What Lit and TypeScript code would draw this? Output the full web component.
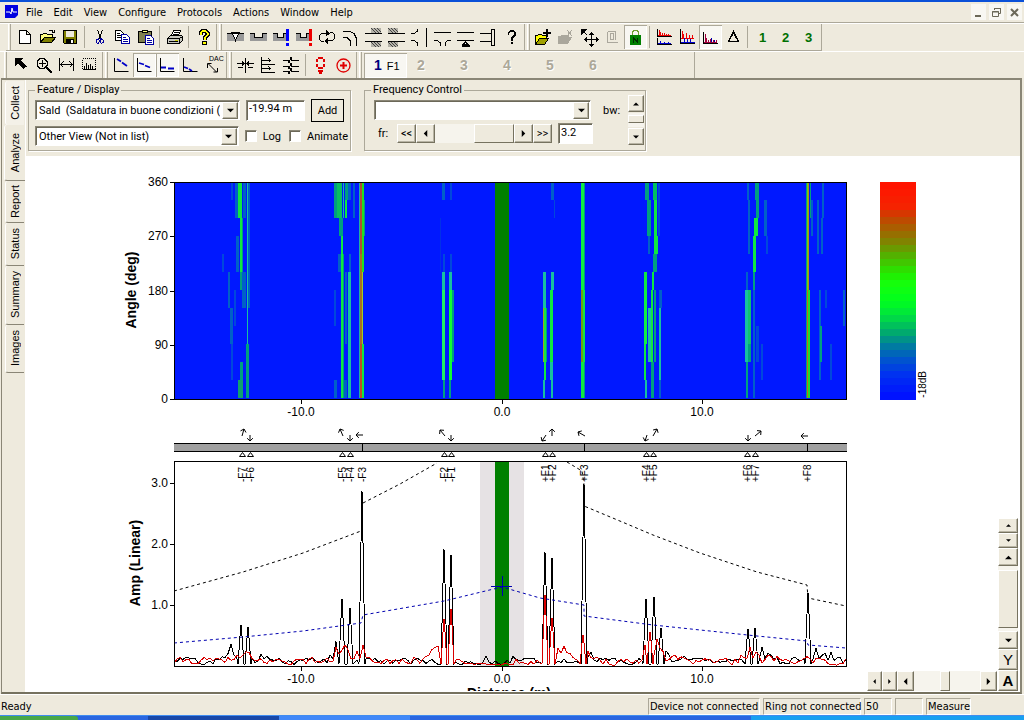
import { LitElement, html, svg, css } from "lit";
import { customElement, property } from "lit/decorators.js";
import { classMap } from "lit/directives/class-map.js";

const S = (d: string, stroke = "#000", fill = "none", w = 1) =>
  svg`<path d=${d} stroke=${stroke} fill=${fill} stroke-width=${w} />`;

const HATCH = (x: number, y: number) =>
  svg`<rect x=${x} y=${y} width="10" height="5" fill="#b4b2a8" />${S(
    `M${x} ${y}l5 5M${x + 3} ${y}l5 5M${x + 6} ${y}l4 4`, "#444"
  )}`;

const ICONS: Record<string, unknown> = {
  new: S("M6.5 4.5h7l4 4v9h-11zM13.5 4.5v4h4", "#000", "#fff"),
  open: svg`${S("M4.5 16.5v-8h2l1-1h3l1 1h5v3", "#000", "#ffff80")}${S("M4.5 16.5l4-5h11l-4 5z", "#000", "#808000")}${S("M12.5 5.5q3-3 5 1M18.5 3.5v3h-3")}`,
  save: svg`${S("M4.5 4.5h13v13h-12l-1-1z", "#000", "#808000")}<rect x="7" y="5" width="8" height="6" fill="#eeeadd" /><rect x="7" y="13" width="8" height="4" fill="#000" /><rect x="12" y="14" width="2" height="3" fill="#fff" />`,
  cut: svg`${S("M9.5 4l3.5 9M14.5 4l-3.5 9")}${S("M10.5 12.5l-2 1.500v2.500l1.500 1l1.500-2zM13 12.500l2 1.500v2.500l-1.500 1l-1.500-2z", "#0000a0")}`,
  copy: svg`${S("M4.5 4.500h5l3 3v7h-8z", "#000", "#fff")}${S("M6 7.500h3M6 9.500h4M6 11.500h4", "#000")}${S("M10.500 8.500h5l3 3v6h-8z", "#0000a0", "#fff")}${S("M12 11.500h3M12 13.500h5M12 15.500h5", "#0000a0")}`,
  paste: svg`${S("M4.5 5.500h13v11h-13z", "#000", "#808050")}${S("M8.500 6.500v-2h5v2z", "#000", "#ffff80")}${S("M11.500 9.500h5l3 3v6h-8z", "#0000a0", "#fff")}${S("M13 12.500h3M13 14.500h5M13 16.500h5", "#0000a0")}`,
  print: svg`${S("M8.500 9.500l2-5h7l-2 5z", "#000", "#fff")}${S("M4.500 12.500l3-3h11l1 1v4l-3 3h-12z", "#000", "#c8c8c0")}${S("M4.500 12.500h12v5M16.500 12.500l3-2M11 6.500h5M10 8h5M6 15.500h9", "#000")}<rect x="12" y="14" width="3" height="1" fill="#cc0" />`,
  help: svg`${S("M8.500 9v-2l2-2h3l2 2v2l-3 3v2", "#000", "none", 4)}${S("M8.500 8.500v-1.500l2-2h3l2 2v2l-3 3v1.500", "#ffff00", "none", 2)}<rect x="10" y="15" width="5" height="4" fill="#000" /><rect x="11" y="16" width="3" height="2" fill="#ff0" />`,
  weldV: svg`<rect x="3" y="7" width="17" height="8" fill="#999" />${S("M8 6.500l3.500 8l3.500-8z", "#000", "#fff")}${S("M3 7.500h17")}`,
  weldU: svg`<path d="M3 8h5v4h7v-4h5v7h-17z" fill="#999" />${S("M3 7.500h4.500v4h8v-4h4.500")}`,
  weldBlue: svg`<path d="M3 8h4v4h6v-4h4v7h-14z" fill="#999" />${S("M3 7.500h4.500v4h6v-4h3")}<rect x="16" y="3" width="3" height="12" fill="#00f" /><rect x="16" y="17" width="3" height="3" fill="#00f" />`,
  weldRed: svg`<path d="M3 8h4v4h6v-4h4v7h-14z" fill="#999" />${S("M3 7.500h4.500v4h6v-4h3")}<rect x="16" y="3" width="3" height="12" fill="#e00" /><rect x="16" y="17" width="3" height="3" fill="#e00" />`,
  cycle: svg`${S("M8 15.500h-2.500l-2-2v-4l2-2h6M14 6.500h2.500l2 2v4l-2 2h-6")}<path d="M10 4l4 3.500l-4 3zM12 11.500l-4 3.500l4 3z" />`,
  bend: S("M4 5.500h7l4 2l2 4v8M4 11.500h4l3 3v5"),
  cladR: svg`${HATCH(9, 2)}${HATCH(9, 16)}${S("M3 7.500h17M3 15.500h17")}`,
  cladL: svg`${HATCH(3, 2)}${HATCH(3, 16)}${S("M3 7.500h17M3 15.500h17")}`,
  branch: S("M3 7.500h3l3-2v-3M3 14.500h3l3 2v3M18.500 2v19"),
  tee: S("M3 6.500h17M3 14.500h3l3 2v3M20 14.500h-3l-3 2v3"),
  support: svg`${S("M3 6.500h17M3 14.500h17")}<path d="M8 19h8v2h-8zM11 15l4 4h-7z" /><rect x="11" y="17" width="1" height="1" fill="#fff" />`,
  flange: S("M3 7.500h12M3 15.500h12M14.500 3.500h3v16h-3z"),
  question: svg`${S("M8.500 9v-2l2-2h3l1.500 2v2l-3 3v2.500", "#000", "none", 1.6)}<rect x="11" y="16" width="2" height="2" />`,
  openPlus: svg`${S("M3.500 18.500v-9h2l1-1h3l1 1h4v3", "#000", "#ff0")}${S("M3.500 18.500l4-6h9l-4 6z", "#000", "#a0a000")}<path d="M14 3h2v8h-2zM11 6h8v2h-8z" />`,
  openX: svg`<path d="M3 18v-8l6-1h5v2h3l-4 7z" fill="#aaa79c" />${S("M12 4l5 6M17 4l-5 6", "#aaa79c")}`,
  move: svg`${S("M5 5l4 4")}<path d="M3 3h6l-6 6z" />${S("M13.500 8v12M7.500 13.500h12")}<path d="M11 9l2.500-3l2.500 3zM11 18l2.500 3l2.500-3zM9 11l-3 2.500l3 2.500zM18 11l3 2.500l-3 2.500z" />`,
  zeroPage: svg`${S("M6.500 5.500v11h10M6.500 5.500h8v8M9.500 7.500h3v6h-3z", "#aaa79c")}`,
  lock: svg`${S("M8.500 10v-4l1-1.500h4l1 1.500v4", "#70a030", "none", 1.4)}<rect x="6" y="9" width="11" height="10" fill="#008000" />${S("M9.500 17v-5l4 4v-4", "#003000")}`,
  plotDual: svg`${S("M4.500 3v7h14M4.500 12v6h14", "#000")}${S("M6.500 4v5M7.500 6v3M9.500 7v2M11.500 7v2M13.500 8v1M15.500 8v1M5 9.500h13", "#e00")}${S("M5 17.500h13M7.500 15v3M11.500 16v2M15.500 16v2", "#00c")}`,
  plotOver: svg`${S("M4.500 3v14h14", "#000")}${S("M6.500 5v7M7.500 8v4M10.500 7v5M13.500 9v3M16.500 9v3M5 12.500h13", "#e00")}${S("M5 16.500h14M8.500 12v4M11.500 13v3M14.500 13v3", "#00c")}`,
  plotOne: svg`${S("M4.500 6v11h14", "#000")}${S("M6.500 8v8M7.500 12v4M9.500 14v2M11.500 13v3M14.500 14v2M17.500 14v2M5 16.500h13", "#a0003c")}${S("M12.500 12v4M15.500 14v2", "#00a")}`,
  delta: S("M11.500 6l5 9.500h-10z", "#000", "none", 1.6),
  arrow: svg`<path d="M6 4h8l-2.500 2.500l6 6l-3 2.500l-5.500-6l-3 3z" />`,
  zoom: svg`${S("M8 4.500h4l3 3v4l-3 3h-4l-3-3v-4zM10 6v7M6.500 9.500h7")}${S("M14 13l6 6", "#000", "none", 2)}`,
  range: svg`${S("M4.500 4v13M18.500 4v13M6 10.500h11M8.500 7.500l-3 3l3 3M14.500 7.500l3 3l-3 3")}`,
  spectrum: svg`<rect x="4.500" y="4.500" width="13" height="11" fill="none" stroke="#000" stroke-dasharray="1 1" />${S("M6.500 12v3M8.500 9v6M10.500 11v4M12.500 10v5M14.500 12v3M5 15.500h13")}`,
  dacA: svg`${S("M4.500 4v13.500h14")}${S("M7 5l4 2.500M12 8.500l5 3.500", "#0000c8", "none", 1.8)}`,
  dacB: svg`${S("M4.500 4v13.500h14")}${S("M6 9l5 1.500M12 11.500l5 2", "#0000c8", "none", 1.8)}`,
  dacC: svg`${S("M4.500 4v13.500h14")}${S("M5 13.500h5M12 14.500h6", "#0000c8", "none", 2)}`,
  dacD: svg`${S("M4.500 4v13.500h14")}${S("M5 13l4 1.500M10 15l3 2", "#0000c8", "none", 1.8)}`,
  dac: svg`<text x="7" y="7" font-size="7" font-family="Liberation Sans">DAC</text>${S("M6.500 10l8 8M5.500 14v-4.500h4M15.500 14v4h-4")}`,
  splitV: svg`${S("M11.500 4v15M3 9.500h6M14 9.500h6M4 13.500h5M14 13.500h5")}<path d="M8 7l3 2.500l-3 2.500zM15 7l-3 2.500l3 2.500z" />`,
  splitR: svg`${S("M4.500 3v16M4 6.500h10M4 10.500h14M4 14.500h10M4 18.500h14M11.500 4.500l2 2l-2 2M11.500 12.500l2 2l-2 2")}`,
  wiggle: S("M3 6.500h5l1 2l2-5l1 3h7M3 12.500h5l1 2l2-5l1 3h7M3 17.500h5l1 2l2-5l1 3h7"),
  ring: svg`<path d="M9 3h5v2h-5zM7 5h2v3h-2zM14 5h2v3h-2zM7 10h2v3h-2zM14 10h2v3h-2zM9 13h5v2h-5zM9 16h5v2h-1v2h-3v-2h-1z" fill="#e00000" />`,
  target: svg`<circle cx="11.500" cy="11.500" r="6.500" fill="none" stroke="#e00000" stroke-width="1.3" />${S("M11.500 8v7M8 11.500h7", "#e00000", "none", 2)}`,
};

type Item = [name: string, label: string, on?: boolean, off?: boolean] | "|";

const BARS_TOP: Item[][] = [
  [["new", "New"], ["open", "Open"], ["save", "Save"], "|", ["cut", "Cut"], ["copy", "Copy"], ["paste", "Paste"], "|", ["print", "Print"], "|", ["help", "Help"]],
  [["weldV", "Weld"], ["weldU", "Corrosion"], ["weldBlue", "Note"], ["weldRed", "Alert"], ["cycle", "Swap"], ["bend", "Bend"], ["cladR", "Entrance"], ["cladL", "Exit"], ["branch", "Branch"], ["tee", "Tee"], ["support", "Support"], ["flange", "Flange"], ["question", "Unknown"]],
  [["openPlus", "Add file"], ["openX", "Remove file", false, true], ["move", "Move"], ["zeroPage", "Zero", false, true], ["lock", "Lock", true], "|", ["plotDual", "Split plots"], ["plotOver", "Overlay"], ["plotOne", "Single plot", true], ["delta", "Delta"], "|", ["1", "Slot 1"], ["2", "Slot 2"], ["3", "Slot 3"]],
];
const BARS_LOW: Item[][] = [
  [["arrow", "Select"], ["zoom", "Zoom"], ["range", "Range"], ["spectrum", "Spectrum"]],
  [["dacA", "Curve A"], ["dacB", "Curve B", true], ["dacC", "Curve C", true], ["dacD", "Curve D"], ["dac", "DAC"]],
  [["splitV", "Align"], ["splitR", "Shift"], ["wiggle", "Traces"], "|", ["ring", "Ring"], ["target", "Target"]],
];

/* Angle map: x, width, first row, row after last, colour. Rows are 30 degrees high. */
const G = "#10e840", T = "#00a080", C = "#18c0a0", D = "#0060c8", E = "#0048dc";
const CELLS: [number, number, number, number, string][] = [
  [222, 2, 4, 5, E], [228, 2, 5, 7, D], [230, 3, 7, 9, D], [231, 2, 9, 11, E], [234, 2, 6, 8, E],
  [231, 2, 0, 1, E], [235, 3, 0, 2, D], [238, 4, 0, 2, G], [240, 2, 2, 5, G], [242, 1, 2, 5, T], [236, 3, 3, 5, D],
  [240, 4, 5, 6, T], [242, 4, 5, 7, D], [240, 3, 10, 12, T], [238, 5, 11, 12, "#10a070"], [243, 3, 0, 2, D],
  [247, 1, 0, 12, C], [248, 2, 0, 7, D], [246, 3, 9, 12, T],
  [334, 3, 0, 2, T], [337, 5, 0, 2, "#08c060"], [343, 1, 0, 2, C], [345, 4, 0, 1, T], [345, 2, 1, 2, G], [348, 3, 0, 1, D], [353, 2, 0, 2, D],
  [339, 4, 2, 3, T], [341, 2, 3, 5, G], [338, 3, 4, 5, D], [343, 1, 4, 12, T], [341, 2, 5, 12, G], [345, 2, 5, 9, D],
  [349, 2, 4, 5, D], [348, 3, 5, 12, C], [334, 2, 6, 8, E], [334, 3, 11, 12, D], [344, 3, 11, 12, D],
  [359, 1, 0, 12, "#20b0a0"], [360, 2, 0, 4, "#b05030"], [360, 2, 4, 9, "#a87020"], [360, 2, 9, 12, "#c05020"], [362, 2, 0, 5, "#20e020"], [364, 1, 1, 3, T], [362, 1, 5, 9, "#a0d020"], [362, 2, 9, 12, G],
  [442, 3, 0, 1, D], [450, 2, 0, 1, E], [440, 1, 2, 5, "#0030e8"], [443, 2, 4, 5, E], [450, 2, 4, 5, E],
  [442, 3, 5, 6, C], [449, 3, 5, 6, C], [442, 3, 6, 11, "#20f060"], [449, 3, 6, 11, "#10ff30"], [452, 2, 6, 10, T], [443, 2, 11, 12, T], [449, 2, 11, 12, T],
  [551, 3, 0, 1, D], [554, 1, 1, 2, E], [543, 3, 5, 7, C], [551, 3, 5, 6, C], [543, 1, 7, 10, "#a0a020"], [544, 2, 7, 11, G], [546, 1, 7, 10, T],
  [550, 3, 6, 10, G], [550, 3, 10, 11, C], [543, 2, 11, 12, C], [551, 2, 11, 12, C],
  [581, 3, 0, 6, "#10f040"], [584, 1, 0, 12, T], [581, 2, 6, 10, "#70a010"], [583, 2, 6, 10, G], [581, 3, 10, 12, G],
  [645, 4, 0, 1, T], [647, 4, 1, 3, T], [648, 2, 3, 4, D], [653, 4, 0, 1, "#00c060"], [654, 3, 1, 3, G], [654, 4, 3, 4, G], [653, 4, 4, 5, T], [658, 2, 0, 3, E],
  [644, 3, 5, 6, G], [652, 2, 5, 6, G], [644, 3, 6, 9, "#10f040"], [651, 2, 6, 10, G], [648, 3, 7, 10, C], [644, 2, 9, 11, G], [651, 3, 10, 12, T], [645, 2, 11, 12, C], [659, 3, 6, 7, D], [659, 2, 7, 11, C], [659, 2, 11, 12, D], [654, 2, 6, 10, T],
  [747, 2, 0, 1, D], [748, 2, 1, 4, D], [755, 4, 0, 1, T], [756, 3, 1, 2, T], [754, 4, 2, 3, G], [753, 3, 3, 5, G], [753, 2, 5, 6, T], [764, 3, 1, 3, D], [766, 2, 3, 4, E], [746, 2, 5, 6, D],
  [745, 3, 6, 10, C], [748, 3, 6, 9, "#10c070"], [753, 2, 6, 12, D], [748, 3, 9, 10, T], [746, 2, 10, 12, T], [756, 3, 8, 10, E], [761, 2, 9, 11, E],
  [806, 1, 0, 12, T], [807, 1, 0, 6, "#70d010"], [807, 1, 6, 12, "#c07010"], [808, 1, 0, 6, "#b09010"], [808, 2, 6, 12, "#20e020"], [810, 1, 0, 2, T], [811, 2, 1, 3, D],
  [817, 2, 1, 4, D], [822, 2, 0, 2, D], [821, 2, 2, 4, D], [819, 2, 6, 11, D], [820, 2, 8, 10, T], [825, 2, 6, 7, E], [830, 2, 9, 11, E], [843, 2, 6, 8, D],
];

/* Echo peaks: x, height in pixels, half width */
type Peak = [number, number, number];
const BLACK: Peak[] = [
  [184, 9, 3], [217, 10, 3], [223, 13, 3], [227, 16, 4], [231, 21, 5], [235, 14, 4], [241, 41, 4], [248, 39, 4], [261, 11, 4], [268, 12, 4],
  [331, 14, 4], [336, 24, 4], [342, 67, 4], [350, 58, 4], [362, 175, 4], [444, 117, 4], [451, 111, 4], [486, 9, 5], [514, 12, 4],
  [545, 114, 4], [552, 108, 4], [584, 182, 4], [590, 18, 4], [646, 67, 4], [654, 69, 5], [661, 38, 5], [667, 18, 5], [685, 13, 4],
  [748, 37, 4], [755, 38, 4], [762, 18, 4], [769, 15, 6], [776, 10, 5], [808, 73, 4], [816, 17, 5], [824, 15, 6], [831, 13, 5],
];
const RED: Peak[] = [
  [228, 8, 5], [238, 13, 5], [245, 17, 5], [249, 13, 4], [312, 8, 5], [336, 18, 4], [341, 19, 5], [346, 26, 5], [357, 14, 6], [363, 20, 4],
  [415, 11, 4], [428, 12, 8], [434, 20, 10], [440, 26, 8], [444, 47, 4], [451, 57, 4], [460, 8, 4], [545, 71, 4], [549, 24, 4], [552, 48, 4], [558, 17, 8], [564, 19, 9], [570, 12, 9],
  [583, 31, 4], [588, 14, 5], [596, 10, 7], [646, 26, 5], [650, 34, 4], [657, 26, 5], [661, 21, 6], [674, 12, 8], [682, 10, 8],
  [742, 13, 5], [750, 18, 5], [757, 17, 5], [769, 12, 8], [777, 9, 6], [808, 11, 5], [820, 9, 5],
];

const trace = (peaks: Peak[], start: number, quiet: number) => {
  let seed = start;
  let level = 4;
  let d = "M175 662";
  for (let x = 177; x <= 846; x += 3) {
    seed = (seed * 1103515245 + 12345) % 2147483648;
    level = level * 0.25 + (seed / 2147483648) * 9 * 0.75;
    let v = x > 458 && x < 512 ? level * quiet : level;
    for (const [px, h, w] of peaks) {
      const k = 1 - Math.abs(x - px) / w;
      if (k > 0 && h < 30) v = Math.max(v, h * k);
    }
    const tall = peaks.find(([px, h]) => h >= 30 && Math.abs(px - x) <= 1);
    const near = peaks.some(([px, h, w]) => h >= 30 && Math.abs(px - x) < w);
    if (tall) {
      const [px, h] = tall;
      d += `L${px - 3} 664L${px - 1} ${665 - h * 0.7}L${px} ${666 - h}L${px + 1} ${665 - h * 0.7}L${px + 3} 664`;
    } else if (!near) d += `L${x} ${(665.5 - v).toFixed(1)}`;
  }
  return d;
};

const FEATURES: [string, number, boolean][] = [
  ["-F7", 242, true], ["-F6", 250, true], ["-F5", 342, true], ["-F4", 350, true], ["-F3", 362, false], ["-F2", 444, true], ["-F1", 451, true],
  ["+F1", 545, true], ["+F2", 552, true], ["+F3", 584, false], ["+F4", 646, true], ["+F5", 653, true], ["+F6", 747, true], ["+F7", 755, true], ["+F8", 807, false],
];
const ARROWS: [number, number, number, number][] = [
  [242, 436, 244, 429], [250, 435, 250, 441], [343, 436, 340, 429], [350, 435, 350, 441], [363, 435, 356, 435], [445, 436, 440, 430], [451, 435, 451, 441],
  [546, 435, 542, 441], [552, 436, 552, 429], [585, 436, 578, 432], [647, 435, 645, 441], [653, 436, 657, 429], [748, 435, 748, 441], [755, 436, 761, 431], [808, 436, 801, 436],
];
const arrowPath = ([x1, y1, x2, y2]: number[]) => {
  const a = Math.atan2(y2 - y1, x2 - x1);
  const tip = (o: number) => `${(x2 - 4 * Math.cos(a + o)).toFixed(1)} ${(y2 - 4 * Math.sin(a + o)).toFixed(1)}`;
  return `M${x1} ${y1}L${x2} ${y2}M${tip(0.8)}L${x2} ${y2}L${tip(-0.8)}`;
};

@customElement("inspection-plot")
class InspectionPlot extends LitElement {
  static styles = css`
    :host { display: block; }
    svg { display: block; font: 12px "Liberation Sans", Arial, sans-serif; }
    .line { fill: none; stroke: #000; shape-rendering: crispEdges; }
    .red { stroke: #d80000; }
    .dash { fill: none; stroke: #000; stroke-dasharray: 3 3; }
    .blue { stroke: #0000b0; }
    .end { text-anchor: end; }
    .mid { text-anchor: middle; }
    .title { font-size: 14px; font-weight: bold; text-anchor: middle; }
    .tag { font-size: 10px; }
    .crisp { shape-rendering: crispEdges; }
  `;
  render() {
    return html`<svg width="830" height="535" viewBox="26 156 830 535" role="img" aria-label="Angle map and amplitude against distance">
      <rect class="crisp" x="174" y="182" width="673" height="218" fill="#0018ff" />
      <g class="crisp">
        ${CELLS.map(([x, w, a, b, c]) => svg`<rect x=${x} y=${182 + a * 18} width=${w} height=${(b - a) * 18} fill=${c} />`)}
        <rect x="495" y="182" width="14" height="218" fill="#008000" />
      </g>
      <path class="line" d="M174.500 182.500H846.500V399.500H174.500z" />
      ${[360, 270, 180, 90, 0].map((v, i) => {
        const y = 182 + Math.round(i * 54.25);
        return svg`<path class="line" d="M170 ${y + 0.5}h4" /><text class="end" x="168" y=${y + 4}>${v}</text>`;
      })}
      ${[400, 667].map((y) => [[301, "-10.0"], [502, "0.0"], [702, "10.0"]].map(([x, t]) =>
        svg`<path class="line" d="M${Number(x) + 0.5} ${y}v4" /><text class="mid" x=${x} y=${y + 16}>${t}</text>`))}
      <text class="title" transform="rotate(-90 136 290)" x="136" y="290">Angle (deg)</text>
      <text class="title" transform="rotate(-90 140 563)" x="140" y="563">Amp (Linear)</text>
      <text class="title" x="509" y="698">Distance (m)</text>

      <rect class="crisp" x="174" y="443" width="673" height="9" fill="#a0a0a0" />
      <path class="line" d="M174 443.500h673M174 451.500h673M362.500 443v9M584.500 443v9M807.500 443v9" />
      ${ARROWS.map((a) => svg`<path d=${arrowPath(a)} fill="none" stroke="#000" />`)}

      <rect class="crisp" x="480" y="462" width="44" height="204" fill="#e6e2e4" />
      <rect class="crisp" x="495" y="462" width="14" height="204" fill="#008000" />
      <path class="dash" d="M174 591L243 572L303 553L361 531M363 503L400 484L437 463" />
      <path class="dash" d="M567 462L582 471L584 484V506L627 524L653 535L700 553L757 572L807 585L808 598L846 606" />
      <path class="line" d=${trace(BLACK, 7711, 0.7)} />
      <path class="line red" d=${trace(RED, 4242, 0.3)} />
      <path class="dash blue" d="M174 643L243 637L303 631L361 623L363 615L444 601L502 587L540 598L584 605V616L653 625L757 636L807 641L808 645L846 648" />
      <path class="line blue" d="M491 586.500h21M502.500 576v20" />
      <path class="line" d="M174.500 461.500H846.500V666.500H174.500z" />
      ${[["3.0", 483], ["2.0", 544], ["1.0", 605]].map(([t, y]) =>
        svg`<path class="line" d="M170 ${Number(y) + 0.5}h4" /><text class="end" x="168" y=${Number(y) + 4}>${t}</text>`)}
      ${FEATURES.map(([t, x, tri]) => svg`
        ${tri ? svg`<path d="M${x + 0.5} 452.500l3 4h-6z" fill="#fff" stroke="#000" />` : ""}
        <text class="tag" transform="rotate(-90 ${x + 4} 482)" x=${x + 4} y="482">${t}</text>`)}
    </svg>`;
  }
}

const STOPS: [number, number[]][] = [
  [0, [255, 20, 0]], [0.11, [244, 36, 0]], [0.14, [205, 60, 0]], [0.25, [140, 120, 0]], [0.33, [85, 175, 0]], [0.42, [35, 235, 0]], [0.47, [20, 255, 12]],
  [0.55, [0, 255, 30]], [0.62, [0, 225, 65]], [0.7, [0, 170, 110]], [0.77, [0, 120, 165]], [0.83, [0, 85, 205]], [0.9, [0, 50, 240]], [1, [0, 18, 255]],
];
const shade = (t: number) => {
  const i = Math.max(1, STOPS.findIndex(([p]) => p >= t));
  const [p0, a] = STOPS[i - 1];
  const [p1, b] = STOPS[i];
  return `rgb(${a.map((v, k) => Math.round(v + ((b[k] - v) * (t - p0)) / (p1 - p0))).join(",")})`;
};

@customElement("arrow-glyph")
class ArrowGlyph extends LitElement {
  @property() dir = "down";
  @property({ type: Number }) size = 7;
  static styles = css`
    :host { display: inline-flex; }
    svg { display: block; }
  `;
  render() {
    const r = { up: 180, down: 0, left: 90, right: 270 }[this.dir] ?? 0;
    return html`<svg width=${this.size} height=${this.size} viewBox="0 0 8 8"><path transform="rotate(${r} 4 4)" d="M0 2h8l-4 4z" /></svg>`;
  }
}

@customElement("app-root")
class AppRoot extends LitElement {
  static styles = css`
    :host {
      --face: #eeeadd; --shade: #8a8676; --soft: #aca899;
      display: flex; flex-direction: column; height: 100vh; overflow: hidden;
      background: var(--face); color: #000;
      font: 11px/13px Roboto, "Liberation Sans", Arial, sans-serif;
    }
    * { box-sizing: border-box; }
    button, input, select { font: inherit; color: inherit; margin: 0; padding: 0; border-radius: 0; }
    button { background: none; border: 0; }
    .strip { height: 2px; background: #0a50d8; flex: none; }
    .menubar { display: flex; align-items: center; height: 21px; padding-left: 5px; border-bottom: 1px solid var(--soft); flex: none; }
    .logo { display: block; margin-right: 2px; }
    .menu { padding: 0 6px 0 5px; font: 11px/13px "DejaVu Sans Condensed", "Liberation Sans", sans-serif; }
    .winbtns { display: flex; gap: 3px; margin-left: auto; padding-right: 2px; }
    .winbtn { width: 15px; height: 16px; background: #f8f7f2; display: grid; place-items: center; }
    .bars { display: flex; height: 28px; border-top: 1px solid #fff; flex: none; }
    .top { padding-left: 6px; }
    .low { padding-left: 2px; height: 27px; }
    .bar { display: flex; align-items: center; border-right: 1px solid var(--soft); border-bottom: 1px solid var(--soft); padding-right: 1px; }
    .low .bar { border-bottom: 0; }
    .grip { width: 3px; margin: 0 2px; align-self: stretch; border-left: 1px solid #fff; border-right: 1px solid var(--soft); }
    .tool { width: 23px; height: 24px; display: grid; place-items: center; }
    .tool svg, .logo, .winbtn svg { display: block; }
    .on { background: #f8f7f2; box-shadow: inset 1px 1px var(--soft), inset -1px -1px #fff; }
    .slot { font: bold 13px "Liberation Sans"; color: #007000; }
    .sep { width: 1px; height: 22px; margin: 0 3px 0 2px; background: var(--soft); }
    .preset { width: 43px; height: 25px; padding-left: 10px; text-align: left; font: bold 14px "Liberation Sans"; color: #aca899; text-shadow: 1px 1px #fff; }
    .preset.on { color: #00007c; text-shadow: none; }
    .preset small { font: 11px "Liberation Sans"; color: #000; margin-left: 5px; }
    .presets { width: 338px; }
    .work { display: flex; flex: 1; min-height: 0; margin: 0 2px 0 1px; border: 2px solid var(--shade); border-width: 2px 2px 2px 1px; border-bottom-color: #76725f; }
    .tabs { width: 24px; flex: none; display: grid; grid-template-rows: 44px 56px 42px 43px 59px 48px; padding: 1px 0 0 2px; border-right: 1px solid #fff; align-content: start; }
    .tab { width: 19px; margin-left: 1px; display: grid; place-items: center; border-bottom: 1px solid var(--shade); border-left: 1px solid #fff; border-radius: 3px 0 0 3px; }
    .tab.first { border-bottom: 0; background: #f4f1e8; }
    .tab.current { width: 21px; margin-left: 0; }
    .tab span { writing-mode: vertical-rl; transform: rotate(180deg); font: 11px/13px "Liberation Sans", Arial, sans-serif; }
    .main { flex: 1; min-width: 0; display: flex; flex-direction: column; }
    .controls { display: flex; gap: 13px; height: 76px; padding: 3px 0 0 2px; flex: none; align-items: flex-start; }
    fieldset { margin: 0; border: 1px solid var(--soft); box-shadow: 1px 1px #fff; height: 68px; min-width: 0; width: 323px; padding: 0 0 0 6px; }
    legend { padding: 0 2px; margin-left: 0; line-height: 14px; }
    .row { display: flex; align-items: center; gap: 6px; height: 26px; }
    .sunk { border: 1px solid; border-color: var(--shade) #fff #fff var(--shade); background: #fff; box-shadow: inset 1px 1px #6b6858; }
    .raised { background: var(--face); border: 1px solid; border-color: #fff #76725f #76725f #fff; box-shadow: inset -1px -1px #b8b4a4; display: grid; place-items: center; }
    .combo { display: grid; grid-template-columns: 1fr 18px; height: 20px; width: 205px; }
    .combo select { grid-area: 1 / 1 / 2 / 3; appearance: none; width: 100%; padding: 0 19px 0 3px; }
    .combo .raised { grid-area: 1 / 2; margin: 2px 2px 1px 0; pointer-events: none; }
    .wide { width: 217px; }
    .field { height: 21px; padding: 0 0 3px 2px; width: 59px; }
    .field.small { width: 35px; }
    .add { width: 33px; height: 23px; border: 1px solid #000; }
    .check { display: flex; align-items: center; gap: 6px; margin-right: 2px; }
    .check input { appearance: none; width: 12px; height: 12px; }
    .freq { display: flex; padding: 0 5px 0 9px; gap: 10px; }
    .freqset { padding: 0; width: 282px; }
    .freqset legend { margin-left: 6px; }
    .freqset .row { gap: 0; }
    .freqset .short { height: 21px; }
    .fr { width: 23px; padding-left: 4px; }
    .step { width: 19px; height: 19px; }
    .bw { display: flex; align-items: flex-start; gap: 8px; }
    .bw .lbl { padding-top: 7px; }
    .vstack { display: flex; flex-direction: column; gap: 1px; margin-top: -2px; }
    .vstack .step { width: 16px; height: 17px; }
    .row .field.small { margin-left: 6px; }
    input[type="range"] { appearance: none; background: #f6f4ed; height: 19px; width: 79px; display: block; }
    input[type="range"]::-webkit-slider-thumb { appearance: none; background: #eeeadd; border: 1px solid; border-color: #fff #76725f #76725f #fff; height: 19px; width: 40px; }
    input.bwr { writing-mode: vertical-lr; width: 16px; height: 14px; }
    input.bwr::-webkit-slider-thumb { width: 16px; height: 8px; }
    input.hr { height: 20px; width: 66px; }
    input.hr::-webkit-slider-thumb { height: 20px; width: 10px; }
    input.vr { writing-mode: vertical-lr; width: 20px; height: 65px; }
    input.vr::-webkit-slider-thumb { width: 20px; height: 58px; }
    .canvas { flex: 1; min-height: 0; display: flex; background: #fff; overflow: hidden; }
    inspection-plot { flex: none; }
    .side { flex: 1; display: flex; flex-direction: column; justify-content: space-between; }
    .legend { display: flex; align-items: flex-end; gap: 1px; padding: 26px 0 0 24px; }
    .scale { width: 36px; display: block; }
    .db { writing-mode: vertical-rl; transform: rotate(180deg); font: 10px/12px "Liberation Sans"; padding-top: 2px; }
    .pads { display: flex; justify-content: flex-end; align-items: flex-end; padding: 0 2px 1px 0; gap: 1px; }
    .hpad { display: flex; }
    .hpad .raised { width: 15px; height: 20px; }
    .hpad .long { width: 17px; }
    .vpad { display: flex; flex-direction: column; }
    .vpad .raised { width: 20px; height: 15px; }
    .vpad .long { height: 18px; }
    .vpad .letter { height: 21px; font: bold 15px "Liberation Sans"; }
    .vpad .plain { font-weight: normal; }
    .status { display: flex; align-items: center; height: 21px; gap: 3px; flex: none; border-top: 1px solid #fff; padding: 2px 53px 0 1px; font: 11px/13px "DejaVu Sans Condensed", "Liberation Sans", sans-serif; }
    .status .msg { flex: 1; }
    .cell { height: 17px; padding: 1px; border: 1px solid; border-color: var(--soft) #fff #fff var(--soft); white-space: nowrap; }
    .c1 { width: 112px; } .c2 { width: 98px; } .c3 { width: 28px; } .c4 { width: 28px; } .c5 { width: 45px; }
    .taskbar { display: flex; height: 5px; flex: none; background: #2a66e0; border-top: 1px solid #3f8cf0; }
    .start { width: 78px; background: #48a848; border-radius: 0 3px 0 0; }
    .tasks { flex: 1; display: flex; padding-left: 70px; }
    .task { width: 131px; background: #1848a8; } .task.lit { background: #4088f8; }
    .tray { width: 273px; background: #18a0f0; }
  `;

  private tool(it: Item) {
    if (it === "|") return html`<span class="sep"></span>`;
    const [name, label, on, off] = it;
    const icon = ICONS[name];
    return html`<button class=${classMap({ tool: true, on: !!on, slot: !icon })} aria-label=${label} ?disabled=${!!off}>
      ${icon ? html`<svg width="23" height="22" viewBox="0 0 23 22" shape-rendering=${name === "target" || name.startsWith("dac") ? "auto" : "crispEdges"}>${icon}</svg>` : name}
    </button>`;
  }
  private bar(items: Item[]) {
    return html`<div class="bar" role="toolbar"><span class="grip"></span>${items.map((i) => this.tool(i))}</div>`;
  }
  private step(dir: string, cls = "step", size = 7) {
    return html`<button class="raised ${cls}" aria-label=${dir}><arrow-glyph dir=${dir} size=${size}></arrow-glyph></button>`;
  }

  render() {
    return html`
      <div class="strip"></div>
      <nav class="menubar">
        <svg class="logo" width="14" height="14" viewBox="0 0 14 14"><path d="M0 0h13v10l-3 3h-10z" fill="#0000e0" /><path d="M1 7h4l1 2l1-6l1 4h4" fill="none" stroke="#fff" /></svg>
        ${["File", "Edit", "View", "Configure", "Protocols", "Actions", "Window", "Help"].map((m) => html`<button class="menu">${m}</button>`)}
        <div class="winbtns">
          <button class="winbtn" aria-label="Minimize"><svg width="11" height="11"><path d="M2 9h6" stroke="#6b6858" stroke-width="2" /></svg></button>
          <button class="winbtn" aria-label="Restore"><svg width="11" height="11"><path d="M3.500 3V1.500h6v5H8M3 1.500h7M1.500 4.500h6v5h-6zM1 5h7" fill="none" stroke="#6b6858" /></svg></button>
          <button class="winbtn" aria-label="Close"><svg width="11" height="11"><path d="M2 2l7 7M9 2l-7 7" stroke="#6b6858" stroke-width="2" /></svg></button>
        </div>
      </nav>
      <div class="bars top">${BARS_TOP.map((b) => this.bar(b))}</div>
      <div class="bars low">
        ${BARS_LOW.map((b) => this.bar(b))}
        <div class="bar presets" role="toolbar"><span class="grip"></span>
          <button class="preset on">1<small>F1</small></button>
          ${[2, 3, 4, 5, 6].map((n) => html`<button class="preset" disabled>${n}</button>`)}
        </div>
      </div>
      <div class="work">
        <div class="tabs" role="tablist">
          ${["Collect", "Analyze", "Report", "Status", "Summary", "Images"].map((t, i) =>
            html`<button role="tab" class=${classMap({ tab: true, first: i === 0, current: i === 1 })}><span>${t}</span></button>`)}
        </div>
        <main class="main">
          <div class="controls">
            <fieldset>
              <legend>Feature / Display</legend>
              <div class="row">
                <div class="combo"><select class="sunk" aria-label="Feature"><option>Sald\u00a0 (Saldatura in buone condizioni (S</option></select><span class="raised"><arrow-glyph></arrow-glyph></span></div>
                <input class="sunk field" aria-label="Position" value="-19.94 m" />
                <button class="add">Add</button>
              </div>
              <div class="row">
                <div class="combo"><select class="sunk" aria-label="View"><option>Other View (Not in list)</option></select><span class="raised"><arrow-glyph></arrow-glyph></span></div>
                <label class="check"><input class="sunk" type="checkbox" />Log</label>
                <label class="check"><input class="sunk" type="checkbox" />Animate</label>
              </div>
            </fieldset>
            <fieldset class="freqset">
              <legend>Frequency Control</legend>
              <div class="freq">
                <div>
                  <div class="row"><div class="combo wide"><select class="sunk" aria-label="Frequency"><option></option></select><span class="raised"><arrow-glyph></arrow-glyph></span></div></div>
                  <div class="row short">
                    <label class="fr" for="fr">fr:</label>
                    <button class="raised step">&lt;&lt;</button>${this.step("left")}
                    <input id="fr" type="range" value="100" />
                    ${this.step("right")}<button class="raised step">&gt;&gt;</button>
                    <input class="sunk field small" aria-label="Frequency value" value="3.2" />
                  </div>
                </div>
                <div class="bw">
                  <label class="lbl" for="bw">bw:</label>
                  <div class="vstack">${this.step("up", "step", 6)}<input id="bw" class="bwr" type="range" value="25" />${this.step("down", "step", 6)}</div>
                </div>
              </div>
            </fieldset>
          </div>
          <div class="canvas">
            <inspection-plot></inspection-plot>
            <div class="side">
              <div class="legend">
                <svg class="scale" height="218" viewBox="0 0 36 218" shape-rendering="crispEdges">
                  ${Array.from({ length: 31 }, (_, i) => svg`<rect y=${i * 7} width="36" height="8" fill=${shade(i / 30)} />`)}
                </svg>
                <span class="db">-18dB</span>
              </div>
              <div class="pads">
                <div class="hpad">
                  ${this.step("left", "", 5)}${this.step("right", "", 5)}${this.step("left", "long")}
                  <input class="hr" type="range" aria-label="Scroll distance" value="46" />
                  ${this.step("right", "long")}
                </div>
                <div class="vpad">
                  ${this.step("up", "", 5)}${this.step("down", "", 5)}${this.step("up", "long")}
                  <input class="vr" type="range" aria-label="Scroll amplitude" value="60" />
                  ${this.step("down", "long")}
                  <button class="raised letter plain">Y</button>
                  <button class="raised letter">A</button>
                </div>
              </div>
            </div>
          </div>
        </main>
      </div>
      <footer class="status">
        <span class="msg">Ready</span>
        <span class="cell c1">Device not connected</span><span class="cell c2">Ring not connected</span>
        <span class="cell c3">50</span><span class="cell c4"></span><span class="cell c5">Measure</span>
      </footer>
      <div class="taskbar"><div class="start"></div><div class="tasks"><div class="task"></div><div class="task lit"></div></div><div class="tray"></div></div>
    `;
  }
}
